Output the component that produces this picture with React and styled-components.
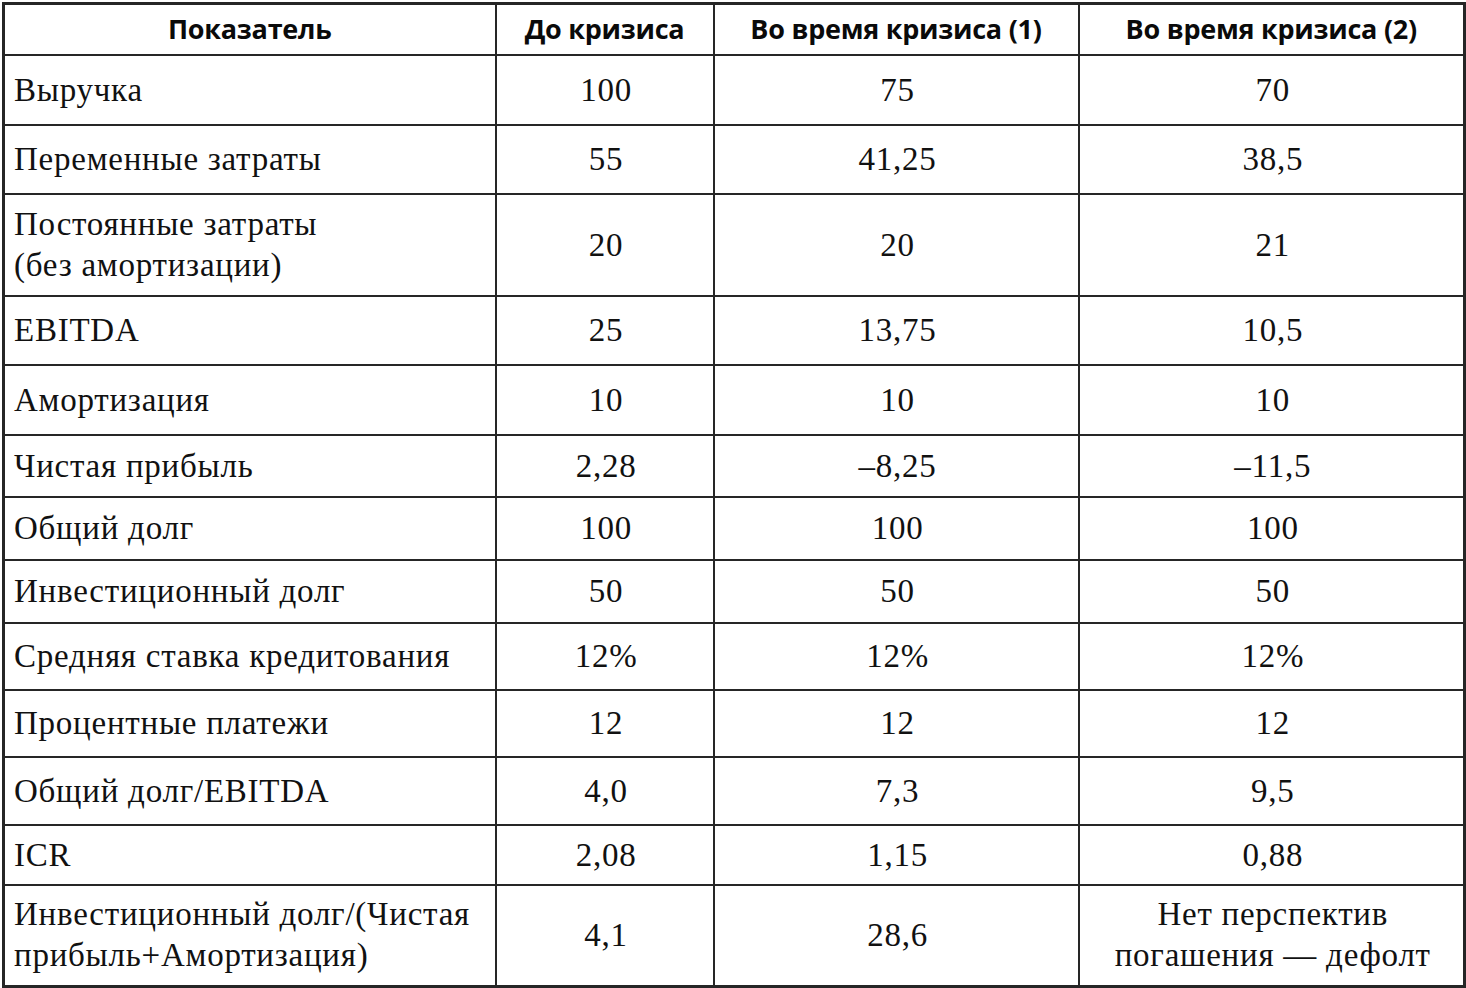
import React from "react";
import styled, { createGlobalStyle } from "styled-components";

const Global = createGlobalStyle`
  html, body { margin: 0; padding: 0; background: #fff; }
  body { width: 1466px; height: 988px; overflow: hidden; }
`;

const Page = styled.div`
  padding: 2px 3px 0 2px;
  box-sizing: border-box;
  width: 1466px;
`;

const Table = styled.table`
  width: 1461px;
  border-collapse: collapse;
  table-layout: fixed;
  border: 3px solid #262626;
  color: #111;
`;

const HeadCell = styled.th`
  border: 2px solid #262626;
  height: 47px;
  padding: 0 4px 2px;
  font-family: "Open Sans", "Liberation Sans", sans-serif;
  font-weight: 700;
  font-size: 27px;
  letter-spacing: -0.25px;
  text-align: center;
  vertical-align: middle;
  color: #0a0a0a;
`;

const Row = styled.tr`
  height: ${(p) => p.$h}px;
`;

const Cell = styled.td`
  border: 2px solid #262626;
  padding: 0 6px 0 9px;
  font-family: "Liberation Serif", "DejaVu Serif", serif;
  font-size: 33px;
  line-height: 41px;
  letter-spacing: 0.75px;
  text-align: ${(p) => (p.$label ? "left" : "center")};
  vertical-align: middle;
  color: #111;
`;

const cols = [492, 218, 365, 386];

const rows = [
  { h: 70, label: "Выручка", v: ["100", "75", "70"] },
  { h: 69, label: "Переменные затраты", v: ["55", "41,25", "38,5"] },
  { h: 102, label: ["Постоянные затраты", "(без амортизации)"], v: ["20", "20", "21"] },
  { h: 69, label: "EBITDA", v: ["25", "13,75", "10,5"] },
  { h: 70, label: "Амортизация", v: ["10", "10", "10"] },
  { h: 62, label: "Чистая прибыль", v: ["2,28", "–8,25", "–11,5"] },
  { h: 63, label: "Общий долг", v: ["100", "100", "100"] },
  { h: 63, label: "Инвестиционный долг", v: ["50", "50", "50"] },
  { h: 67, label: "Средняя ставка кредитования", v: ["12%", "12%", "12%"] },
  { h: 67, label: "Процентные платежи", v: ["12", "12", "12"] },
  { h: 68, label: "Общий долг/EBITDA", v: ["4,0", "7,3", "9,5"] },
  { h: 60, label: "ICR", v: ["2,08", "1,15", "0,88"] },
  {
    h: 101,
    label: ["Инвестиционный долг/(Чистая", "прибыль+Амортизация)"],
    v: ["4,1", "28,6", ["Нет перспектив", "погашения — дефолт"]],
  },
];

const lines = (t) =>
  Array.isArray(t)
    ? t.map((s, i) => (
        <React.Fragment key={i}>
          {i > 0 && <br />}
          {s}
        </React.Fragment>
      ))
    : t;

export default function App() {
  return (
    <Page>
      <Global />
      <Table>
        <colgroup>
          {cols.map((w, i) => (
            <col key={i} style={{ width: w }} />
          ))}
        </colgroup>
        <thead>
          <tr>
            <HeadCell>Показатель</HeadCell>
            <HeadCell>До кризиса</HeadCell>
            <HeadCell>Во время кризиса (1)</HeadCell>
            <HeadCell>Во время кризиса (2)</HeadCell>
          </tr>
        </thead>
        <tbody>
          {rows.map((r, i) => (
            <Row key={i} $h={r.h}>
              <Cell $label>{lines(r.label)}</Cell>
              {r.v.map((v, j) => (
                <Cell key={j}>{lines(v)}</Cell>
              ))}
            </Row>
          ))}
        </tbody>
      </Table>
    </Page>
  );
}
